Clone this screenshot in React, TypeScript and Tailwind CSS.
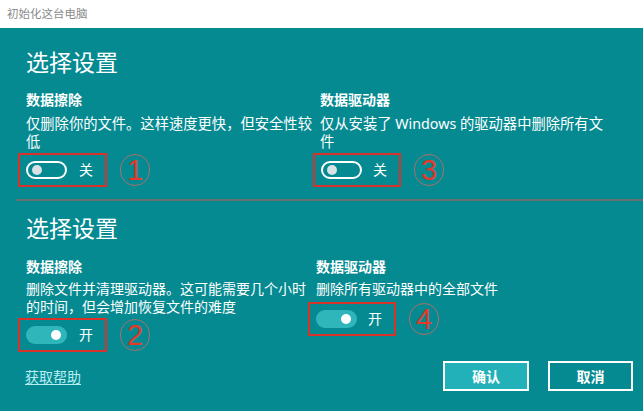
import React from "react";

const FONT = { fontFamily: '"Noto Sans", "Noto Sans CJK SC", sans-serif' };

function Toggle({ on }: { on: boolean }) {
  if (on) {
    return (
      <div className="w-[41px] h-[18px] rounded-full bg-[#2fb6bb] flex items-center justify-end pr-[6px]">
        <div className="w-[10px] h-[10px] rounded-full bg-white" />
      </div>
    );
  }
  return (
    <div className="w-[41px] h-[18px] rounded-full border-2 border-white flex items-center pl-[4px]">
      <div className="w-[10px] h-[10px] rounded-full bg-[#d8e2e4]" />
    </div>
  );
}

function Circled({ n }: { n: string }) {
  return (
    <div
      className="w-[30px] h-[32px] rounded-full border border-[#a8706a] flex items-center justify-center text-[29px] leading-none font-medium text-[#e23a2a]"
      style={{ fontFamily: '"Liberation Sans", sans-serif' }}
    >
      {n}
    </div>
  );
}

function Control({ on, label, n, shift, gap }: { on: boolean; label: string; n: string; shift: string; gap: string }) {
  return (
    <div className={`flex items-center ${shift}`}>
      <div className="h-[34px] border-2 border-[#d8322a] flex items-center pl-[6px] pr-[12px]">
        <Toggle on={on} />
        <span className={`text-[14px] leading-none text-white ${gap}`}>{label}</span>
      </div>
      <div className="ml-[13px]">
        <Circled n={n} />
      </div>
    </div>
  );
}

export default function App() {
  return (
    <div className="w-[643px] h-[411px] flex flex-col overflow-hidden" style={FONT}>
      <div className="h-[28px] shrink-0 bg-white flex items-center pl-[7px] text-[11.5px] text-[#8a8a8a]">
        初始化这台电脑
      </div>
      <div className="flex-1 bg-[#068a92] flex flex-col text-white">
        {/* Section 1 */}
        <div className="pt-[18px]">
          <h2 className="pl-[26px] text-[23px] leading-[32px]">选择设置</h2>
          <div className="grid grid-cols-[320px_1fr] mt-[12px]">
            <div className="pl-[26px]">
              <div className="text-[14px] leading-[20px] font-bold">数据擦除</div>
              <div className="mt-[5px] text-[14.3px] leading-[18px]">
                <div>仅删除你的文件。这样速度更快，但安全性较</div>
                <div>低</div>
              </div>
              <div className="mt-[2px]">
                <Control on={false} label="关" n="1" shift="-ml-[8px]" gap="ml-[12px]" />
              </div>
            </div>
            <div>
              <div className="text-[14px] leading-[20px] font-bold">数据驱动器</div>
              <div className="mt-[5px] text-[14.3px] leading-[18px]">
                <div>仅从安装了 Windows 的驱动器中删除所有文</div>
                <div>件</div>
              </div>
              <div className="mt-[2px]">
                <Control on={false} label="关" n="3" shift="-ml-[7px]" gap="ml-[11px]" />
              </div>
            </div>
          </div>
        </div>

        <div className="mt-[12px] ml-[16px] h-[2px] bg-[#6a6e72]" />

        {/* Section 2 */}
        <div className="pt-[11px]">
          <h2 className="pl-[26px] text-[23px] leading-[32px]">选择设置</h2>
          <div className="grid grid-cols-[316px_1fr] mt-[13px]">
            <div className="pl-[26px]">
              <div className="text-[14px] leading-[20px] font-bold">数据擦除</div>
              <div className="mt-[3px] text-[14px] leading-[18px]">
                <div>删除文件并清理驱动器。这可能需要几个小时</div>
                <div>的时间，但会增加恢复文件的难度</div>
              </div>
              <div className="mt-[2px]">
                <Control on={true} label="开" n="2" shift="-ml-[8px]" gap="ml-[12px]" />
              </div>
            </div>
            <div>
              <div className="text-[14px] leading-[20px] font-bold">数据驱动器</div>
              <div className="mt-[3px] text-[14px] leading-[18px]">
                <div>删除所有驱动器中的全部文件</div>
              </div>
              <div className="mt-[4px]">
                <Control on={true} label="开" n="4" shift="-ml-[8px]" gap="ml-[11px]" />
              </div>
            </div>
          </div>
        </div>

        {/* Bottom row */}
        <div className="mt-[9px] flex items-center h-[30px]">
          <span className="pl-[25px] text-[14px] text-[#b8eef0] underline underline-offset-2">获取帮助</span>
          <div className="ml-auto flex gap-[19px] pr-[10px]">
            <button className="w-[86px] h-[30px] border-2 border-white bg-[#22b1b8] text-[14px] font-bold text-white">
              确认
            </button>
            <button className="w-[85px] h-[30px] border-2 border-white text-[14px] font-bold text-white">
              取消
            </button>
          </div>
        </div>
      </div>
    </div>
  );
}
